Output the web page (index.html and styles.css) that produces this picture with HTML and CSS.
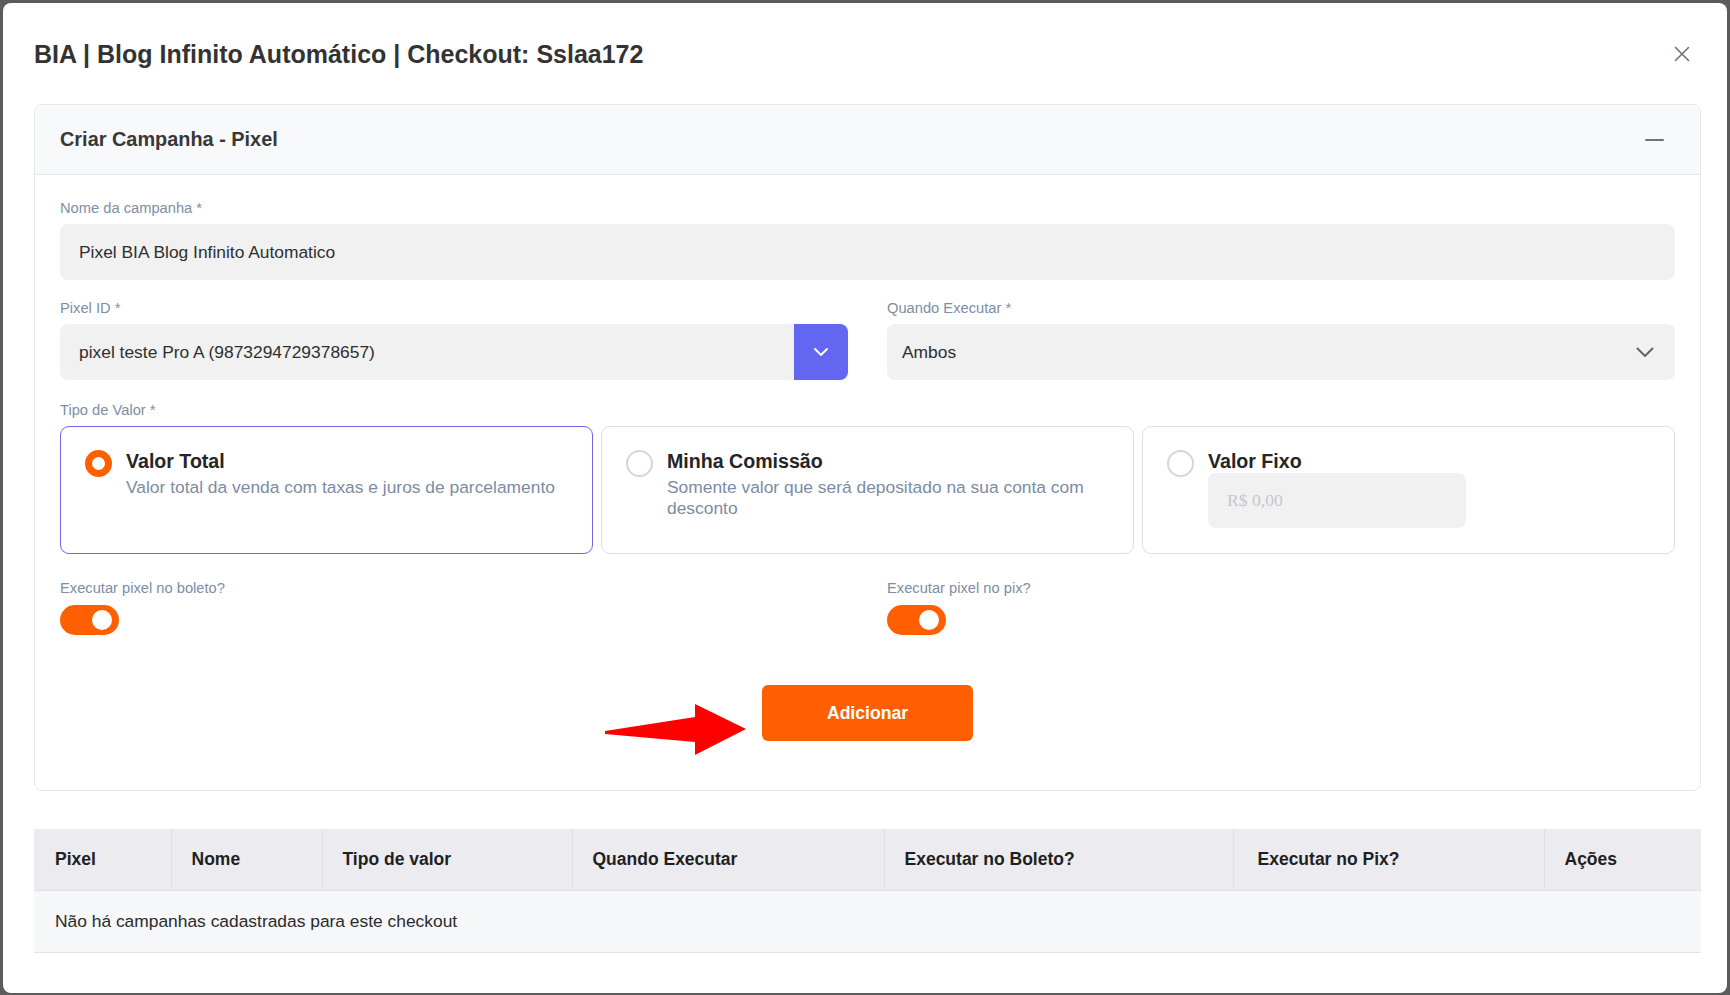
FILE: index.html
```html
<!DOCTYPE html>
<html lang="pt-BR">
<head>
<meta charset="utf-8">
<title>Checkout Pixel</title>
<link rel="stylesheet" href="styles.css">
</head>
<body>
<div class="modal">
  <div class="modal-head">
    <h1 class="modal-title">BIA | Blog Infinito Automático | Checkout: Sslaa172</h1>
    <button class="close-btn" aria-label="Fechar">
      <svg width="16" height="16" viewBox="0 0 16 16"><path d="M1.5 1.5 L14.5 14.5 M14.5 1.5 L1.5 14.5" stroke="#6b7280" stroke-width="1.6" fill="none" stroke-linecap="round"/></svg>
    </button>
  </div>

  <section class="card">
    <div class="card-head">
      <h2 class="card-title">Criar Campanha - Pixel</h2>
      <span class="minus"></span>
    </div>
    <div class="card-body">
      <div class="field">
        <label class="label">Nome da campanha *</label>
        <div class="input">Pixel BIA Blog Infinito Automatico</div>
      </div>

      <div class="row2">
        <div class="field">
          <label class="label">Pixel ID *</label>
          <div class="input-group">
            <div class="input grow">pixel teste Pro A (9873294729378657)</div>
            <div class="select-btn">
              <svg width="16" height="10" viewBox="0 0 16 10"><path d="M2 2 L8 8 L14 2" stroke="#fff" stroke-width="2" fill="none" stroke-linecap="round" stroke-linejoin="round"/></svg>
            </div>
          </div>
        </div>
        <div class="field">
          <label class="label">Quando Executar *</label>
          <div class="input select">
            <span>Ambos</span>
            <svg width="18" height="11" viewBox="0 0 18 11"><path d="M1.5 1.5 L9 9 L16.5 1.5" stroke="#5f6670" stroke-width="2" fill="none" stroke-linecap="round" stroke-linejoin="round"/></svg>
          </div>
        </div>
      </div>

      <div class="field type-field">
        <label class="label">Tipo de Valor *</label>
        <div class="options">
          <div class="option selected">
            <span class="radio on"></span>
            <div class="opt-text">
              <div class="opt-title">Valor Total</div>
              <div class="opt-desc">Valor total da venda com taxas e juros de parcelamento</div>
            </div>
          </div>
          <div class="option">
            <span class="radio"></span>
            <div class="opt-text">
              <div class="opt-title">Minha Comissão</div>
              <div class="opt-desc">Somente valor que será depositado na sua conta com desconto</div>
            </div>
          </div>
          <div class="option">
            <span class="radio"></span>
            <div class="opt-text">
              <div class="opt-title">Valor Fixo</div>
              <div class="money">R$ 0,00</div>
            </div>
          </div>
        </div>
      </div>

      <div class="row2 toggles">
        <div class="field">
          <label class="label">Executar pixel no boleto?</label>
          <span class="switch"><span class="knob"></span></span>
        </div>
        <div class="field">
          <label class="label">Executar pixel no pix?</label>
          <span class="switch"><span class="knob"></span></span>
        </div>
      </div>

      <div class="actions">
        <svg class="arrow" width="142" height="52" viewBox="0 0 142 52"><polygon points="0,27 90,13 90,0 141,25 90,51 90,38 0,30" fill="#ff0000"/></svg>
        <button class="btn-add">Adicionar</button>
      </div>
    </div>
  </section>

  <table class="tbl">
    <thead>
      <tr>
        <th class="c1">Pixel</th>
        <th class="c2">Nome</th>
        <th class="c3">Tipo de valor</th>
        <th class="c4">Quando Executar</th>
        <th class="c5">Executar no Boleto?</th>
        <th class="c6">Executar no Pix?</th>
        <th class="c7">Ações</th>
      </tr>
    </thead>
    <tbody>
      <tr><td colspan="7">Não há campanhas cadastradas para este checkout</td></tr>
    </tbody>
  </table>
</div>
</body>
</html>
```

FILE: styles.css
```css
* { box-sizing: border-box; }
html, body { margin: 0; padding: 0; }
body {
  background: #5c5c5c;
  font-family: "Liberation Sans", Arial, sans-serif;
  color: #2b2b2b;
  width: 1730px;
  height: 995px;
  overflow: hidden;
  padding: 3px 3px 2px 3px;
}
.modal {
  background: #fff;
  border-radius: 8px;
  height: 990px;
  padding: 0 26px 0 31px;
}
.modal-head {
  height: 101px;
  display: flex;
  align-items: center;
  justify-content: space-between;
}
.modal-title {
  margin: 0;
  font-size: 25px;
  font-weight: 700;
  color: #333;
  line-height: 30px;
}
.close-btn {
  border: 0;
  background: none;
  padding: 0;
  width: 16px;
  height: 16px;
  margin-right: 11px;
  display: flex;
}
.card {
  border: 1px solid #e5e7eb;
  border-radius: 8px;
  overflow: hidden;
}
.card-head {
  height: 70px;
  background: #f8f9fa;
  border-bottom: 1px solid #e5e7eb;
  display: flex;
  align-items: center;
  justify-content: space-between;
  padding: 0 36px 0 25px;
}
.card-title {
  margin: 0;
  font-size: 19.9px;
  font-weight: 700;
  color: #383838;
}
.minus {
  width: 19px;
  height: 2px;
  background: #6b7280;
  border-radius: 1px;
}
.card-body {
  padding: 25px 25px 49px;
  display: flex;
  flex-direction: column;
  gap: 20px;
}
.field {
  display: flex;
  flex-direction: column;
  align-items: flex-start;
}
.type-field { margin-top: 2px; }
.label {
  font-size: 14.7px;
  line-height: 17px;
  color: #7d8ea4;
  margin-bottom: 7px;
}
.input {
  width: 100%;
  height: 56px;
  background: #f1f1f1;
  border-radius: 8px;
  display: flex;
  align-items: center;
  padding: 0 19px;
  font-size: 17.4px;
  color: #2f2f2f;
}
.row2 {
  display: grid;
  grid-template-columns: 1fr 1fr;
  column-gap: 39px;
}
.row2 .field { min-width: 0; }
.input-group {
  display: flex;
  width: 100%;
  height: 56px;
}
.input.grow {
  flex: 1;
  border-radius: 8px 0 0 8px;
}
.select-btn {
  width: 54px;
  height: 56px;
  background: #6366f1;
  border-radius: 0 8px 8px 0;
  display: flex;
  align-items: center;
  justify-content: center;
}
.input.select {
  justify-content: space-between;
  padding: 0 21px 0 15px;
}
.options {
  width: 100%;
  display: grid;
  grid-template-columns: repeat(3, 1fr);
  gap: 8px;
}
.option {
  height: 128px;
  border: 1.5px solid #dcdfe3;
  border-radius: 9px;
  padding: 22px 20px 0 24px;
  display: flex;
  align-items: flex-start;
  gap: 14px;
}
.option.selected {
  border-color: #6d66e8;
}
.radio {
  flex: none;
  width: 27px;
  height: 27px;
  border-radius: 50%;
  border: 2px solid #d0d7df;
  margin-top: 1px;
}
.radio.on {
  border: 7px solid #ff5f00;
}
.opt-title {
  font-size: 19.6px;
  line-height: 24px;
  font-weight: 700;
  color: #252525;
}
.opt-desc {
  margin-top: 4px;
  font-size: 17.4px;
  line-height: 21px;
  color: #7b8ca3;
}
.money {
  width: 258px;
  height: 55px;
  background: #f1f1f1;
  border-radius: 8px;
  display: flex;
  align-items: center;
  padding: 0 19px;
  font-family: "Liberation Serif", "Times New Roman", serif;
  font-size: 17.6px;
  color: #c3c7cd;
}
.toggles { margin-top: 6px; }
.toggles .label { margin-bottom: 8px; }
.switch {
  position: relative;
  width: 59px;
  height: 30px;
  border-radius: 15px;
  background: #ff5f00;
  display: block;
}
.knob {
  position: absolute;
  right: 7px;
  top: 5px;
  width: 20px;
  height: 20px;
  border-radius: 50%;
  background: #fff;
}
.actions {
  position: relative;
  display: flex;
  justify-content: center;
  margin-top: 30px;
}
.btn-add {
  width: 211px;
  height: 56px;
  border: 0;
  border-radius: 6px;
  background: #ff5f00;
  color: #fff;
  font-family: "Liberation Sans", Arial, sans-serif;
  font-size: 17.6px;
  font-weight: 700;
}
.arrow {
  position: absolute;
  left: calc(50% - 263px);
  top: 19px;
}
.tbl {
  margin-top: 38px;
  width: 100%;
  border-collapse: collapse;
  table-layout: fixed;
}
.tbl th {
  height: 61px;
  background: #ebebf0;
  text-align: left;
  font-size: 17.5px;
  font-weight: 700;
  color: #1f1f1f;
  padding: 0 20px;
  border-left: 1px solid #e0e1e7;
  border-bottom: 1px solid #dfe0e5;
}
.tbl th:first-child { border-left: 0; padding-left: 21px; }
.tbl th.c6 { padding-left: 24px; }
.tbl td {
  height: 62px;
  background: #f6f7f9;
  font-size: 17.4px;
  color: #2b2b2b;
  padding: 0 21px;
  border-bottom: 1px solid #e3e4e8;
}
.c1 { width: 137px; }
.c2 { width: 151px; }
.c3 { width: 250px; }
.c4 { width: 312px; }
.c5 { width: 349px; }
.c6 { width: 311px; }
.c7 { width: 157px; }
```
